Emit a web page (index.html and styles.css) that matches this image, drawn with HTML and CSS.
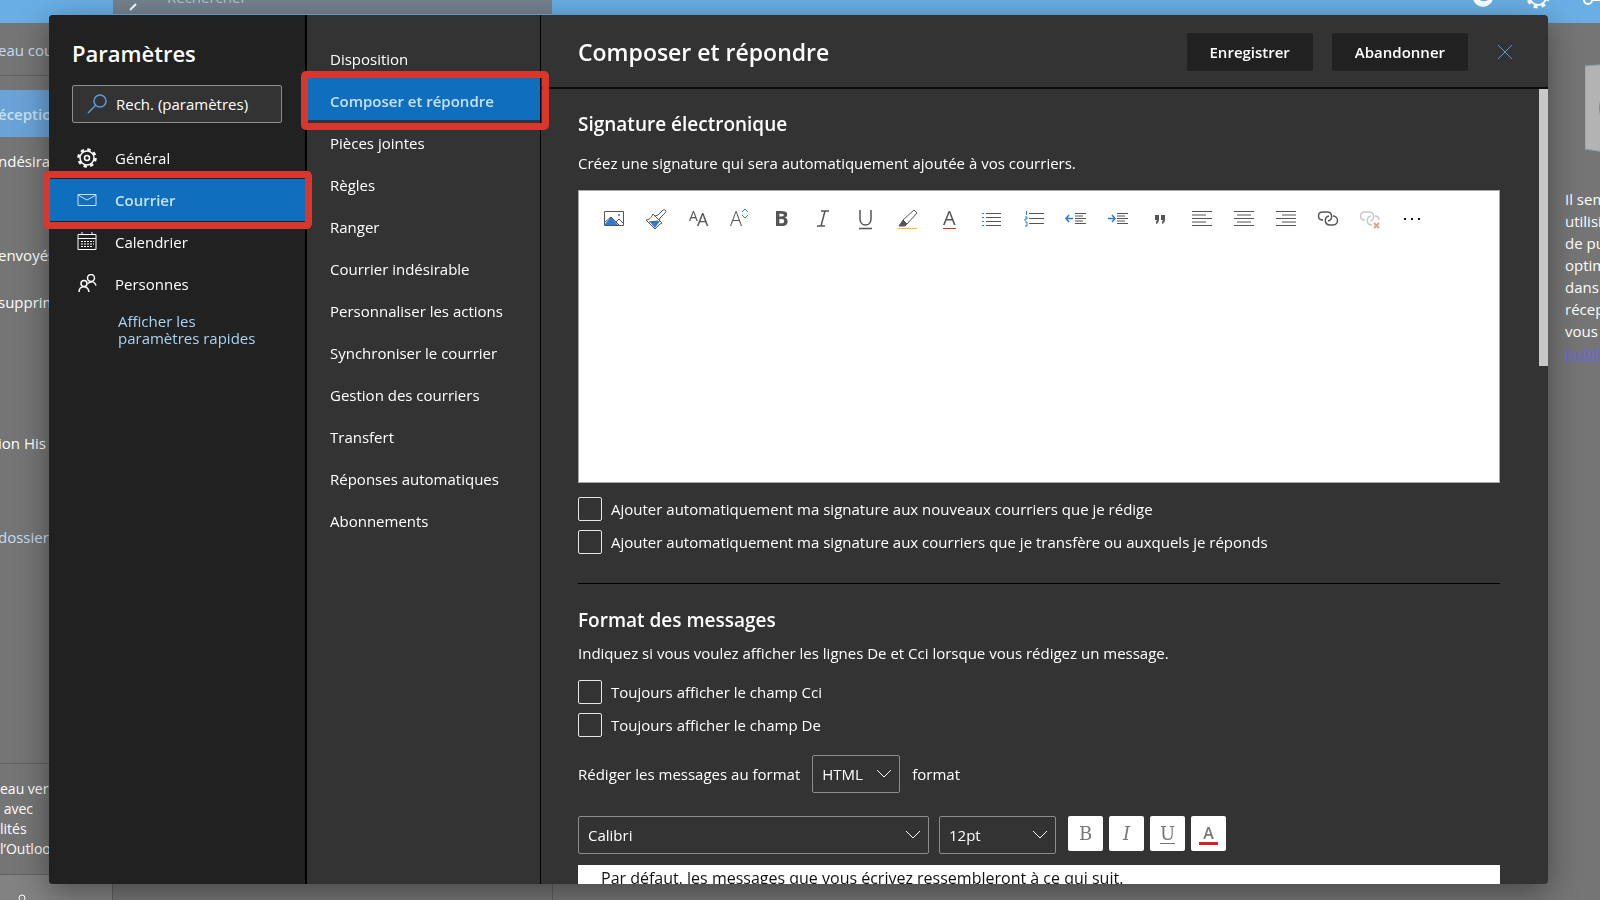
FILE: index.html
```html
<!DOCTYPE html>
<html lang="fr">
<head>
    <meta charset="UTF-8">
    <meta name="viewport" content="width=device-width, initial-scale=1.0">
    <title>Paramètres</title>
    <link rel="stylesheet" href="styles.css">
</head>
<body>
    <!-- Mailbox behind the dialog -->
    <div class="app">
        <div class="topbar">
            <div class="topbar-search">
                <svg width="24" height="24" viewBox="0 0 24 24"><path d="M3 14l6-6" /></svg>
                <span>Rechercher</span>
            </div>
            <div class="topbar-icons">
                <svg width="24" height="24" viewBox="0 0 24 24"><circle cx="12" cy="11" r="10" fill="#fff" stroke="none"/><path d="M7 7c0 6 5 8 9 6" stroke="#69afe5" stroke-width="3"/></svg>
                <svg width="24" height="24" viewBox="0 0 24 24"><circle cx="12" cy="11" r="8" stroke-width="2"/><circle cx="12" cy="11" r="10" stroke-width="3" stroke-dasharray="4 4"/></svg>
                <svg width="24" height="24" viewBox="0 0 24 24"><circle cx="7" cy="14" r="4" stroke-width="2"/><path d="M11 14h12" stroke-width="2"/></svg>
            </div>
        </div>
        <div class="app-body">
            <div class="folders">
                <div class="folder new">eau cou</div>
                <div class="folder current">éceptio</div>
                <div class="folder">ndésirab</div>
                <div class="folder"></div>
                <div class="folder">envoyés</div>
                <div class="folder">supprim</div>
                <div class="folder"></div>
                <div class="folder"></div>
                <div class="folder">ion His</div>
                <div class="folder"></div>
                <div class="folder link">dossier</div>
                <div class="promo">eau ver<br>&nbsp;avec<br>lités<br>l’Outloo</div>
                <div class="modules">
                    <svg width="18" height="24" viewBox="0 0 18 24"><circle cx="9" cy="5" r="3"/><path d="M3 16c0-10 12-10 12 0"/></svg>
                </div>
            </div>
            <div class="messages"></div>
            <div class="reading"></div>
            <div class="ad">
                <svg class="ad-box" width="40" height="92" viewBox="0 0 40 92"><path d="M0 3L40 0V92L0 86z" fill="#b3b3b3" stroke="#8aa2b5"/><circle cx="34" cy="45" r="20" fill="#8f8778" stroke="none"/></svg>
                <p>Il sem<br>utilisi<br>de pu<br>optim<br>dans<br>récep<br>vous<br><a href="#">public</a></p>
            </div>
        </div>
    </div>

    <div class="overlay">
        <div class="dialog">
            <nav class="categories">
                <h1>Paramètres</h1>
                <label class="search">
                    <svg width="20" height="20" viewBox="0 0 20 20"><circle cx="13" cy="7" r="6"/><path d="M9 11L1 19"/></svg>
                    <input type="text" placeholder="Rech. (paramètres)" aria-label="Rech. (paramètres)">
                </label>
                <ul>
                    <li><a href="#">
                        <svg width="20" height="20" viewBox="0 0 20 20"><circle cx="10" cy="10" r="7" stroke-width="1.500"/><circle cx="10" cy="10" r="8.500" stroke-width="2.500" stroke-dasharray="3.340 3.340"/><circle cx="10" cy="10" r="2.500" stroke-width="1.500"/></svg>
                        Général</a></li>
                    <li class="selected"><a href="#">
                        <svg width="20" height="20" viewBox="0 0 20 20"><path d="M1 4.500h18v11H1zM1 5l9 5 9-5"/></svg>
                        Courrier</a></li>
                    <li><a href="#">
                        <svg width="20" height="20" viewBox="0 0 20 20"><path d="M1 2.500h18v15H1zM1 6.500h18M5 0v3M15 0v3"/><path d="M4 9.500h13M4 12h13M4 14.500h11" stroke-dasharray="2 1"/></svg>
                        Calendrier</a></li>
                    <li><a href="#">
                        <svg width="20" height="20" viewBox="0 0 20 20" stroke-width="1.500"><circle cx="14" cy="4" r="3.500"/><path d="M11 9.500c3-3 7-2 8 2"/><circle cx="7" cy="9.500" r="3"/><path d="M2 18c0-7 9-7 10 0"/></svg>
                        Personnes</a></li>
                </ul>
                <a class="quick" href="#">Afficher les<br>paramètres rapides</a>
            </nav>

            <nav class="pages">
                <ul>
                    <li><a href="#">Disposition</a></li>
                    <li class="selected"><a href="#">Composer et répondre</a></li>
                    <li><a href="#">Pièces jointes</a></li>
                    <li><a href="#">Règles</a></li>
                    <li><a href="#">Ranger</a></li>
                    <li><a href="#">Courrier indésirable</a></li>
                    <li><a href="#">Personnaliser les actions</a></li>
                    <li><a href="#">Synchroniser le courrier</a></li>
                    <li><a href="#">Gestion des courriers</a></li>
                    <li><a href="#">Transfert</a></li>
                    <li><a href="#">Réponses automatiques</a></li>
                    <li><a href="#">Abonnements</a></li>
                </ul>
            </nav>

            <main class="panel">
                <header>
                    <h2>Composer et répondre</h2>
                    <button class="action">Enregistrer</button>
                    <button class="action">Abandonner</button>
                    <button class="close" aria-label="Fermer">
                        <svg width="16" height="16" viewBox="0 0 16 16"><path d="M1 1l14 14M15 1L1 15"/></svg>
                    </button>
                </header>
                <div class="content">
                    <section class="signature">
                        <h3>Signature électronique</h3>
                        <p>Créez une signature qui sera automatiquement ajoutée à vos courriers.</p>
                        <div class="editor">
                            <div class="toolbar">
                                <button aria-label="Image"><svg width="24" height="24" viewBox="0 0 24 24"><path d="M3 17l6-7 7 8H3z" fill="#2b7cd3" stroke="none"/><path d="M2.500 4.500h19v14h-19zM3 15l6-5 8 8M14 15l3-3 4 4"/><circle cx="17" cy="8" r="1" fill="#2b7cd3" stroke="none"/></svg></button>
                                <button aria-label="Reproduire la mise en forme"><svg width="24" height="24" viewBox="0 0 24 24"><path d="M6 15l10-1-5 7z" fill="#2b7cd3" stroke="none"/><path d="M9 7l9 9-2 1-5 5-9-9c3 0 5-2 7-6zM11 9l3-1 5-5c2-1 4 1 2 3l-5 5-1 2M5 15l9-1"/></svg></button>
                                <button aria-label="Police"><svg width="24" height="24" viewBox="0 0 24 24"><text x="3" y="14" font-size="14" class="regular">A</text><text x="11" y="19" font-size="18" class="regular">A</text></svg></button>
                                <button aria-label="Taille"><svg width="24" height="24" viewBox="0 0 24 24"><text x="2" y="19" font-size="20">A</text><path d="M14 5l3-3 3 3M14 8l3 3 3-3" stroke="#2b7cd3"/></svg></button>
                                <button aria-label="Gras"><svg width="24" height="24" viewBox="0 0 24 24"><text x="4" y="19" font-size="22" class="heavy">B</text></svg></button>
                                <button aria-label="Italique"><svg width="24" height="24" viewBox="0 0 24 24"><path d="M9 4h8M5 19h8M13 4L9 19" stroke-width="1.500"/></svg></button>
                                <button aria-label="Souligné"><svg width="24" height="24" viewBox="0 0 24 24"><path d="M6 3v9c0 8 11 8 11 0V3M5 21.500h13" stroke-width="1.500"/></svg></button>
                                <button aria-label="Surligner"><svg width="24" height="24" viewBox="0 0 24 24"><path d="M7 13L18 3l3 3-10 11zM7 13l4 4"/><path d="M7 13l4 4-2 2H3z" fill="#555"/><path d="M2 21.500h19" stroke="#ffc000"/></svg></button>
                                <button aria-label="Couleur"><svg width="24" height="24" viewBox="0 0 24 24"><text x="5" y="18" font-size="20" class="regular">A</text><path d="M5 21.500h13" stroke="#d13414"/></svg></button>
                                <button aria-label="Puces"><svg width="24" height="24" viewBox="0 0 24 24"><path d="M6 6.500h15M6 10.500h15M6 14.500h15M6 18.500h15"/><path d="M2 6.500h2M2 10.500h2M2 14.500h2M2 18.500h2" stroke="#2b7cd3"/></svg></button>
                                <button aria-label="Numérotation"><svg width="24" height="24" viewBox="0 0 24 24"><path d="M7 6.500h15M7 11.500h15M7 16.500h15"/><path d="M4.500 4v4M3 10h2v2H3v2M3 15h2v4H3" stroke="#2b7cd3"/></svg></button>
                                <button aria-label="Diminuer le retrait"><svg width="24" height="24" viewBox="0 0 24 24"><path d="M11 6.500h11M11 9h8M11 11.500h11M11 14h8M11 16.500h11"/><path d="M9 11.500H2M5 8l-3 3.500L5 15" stroke="#2b7cd3" stroke-width="1.500"/></svg></button>
                                <button aria-label="Augmenter le retrait"><svg width="24" height="24" viewBox="0 0 24 24"><path d="M11 6.500h11M11 9h8M11 11.500h11M11 14h8M11 16.500h11"/><path d="M2 11.500h7M6 8l3 3.500L6 15" stroke="#2b7cd3" stroke-width="1.500"/></svg></button>
                                <button aria-label="Citation"><svg width="24" height="24" viewBox="0 0 24 24"><path d="M7 8h4v4c0 3-1 4-3 5v-2l1-2H7zM13 8h4v4c0 3-1 4-3 5v-2l1-2h-2z" fill="#555" stroke="none"/></svg></button>
                                <button aria-label="Aligner à gauche"><svg width="24" height="24" viewBox="0 0 24 24"><path d="M2 4.500h20M2 8h14M2 11.500h20M2 15h14M2 18.500h20"/></svg></button>
                                <button aria-label="Centrer"><svg width="24" height="24" viewBox="0 0 24 24"><path d="M2 4.500h20M5 8h14M2 11.500h20M5 15h14M2 18.500h20"/></svg></button>
                                <button aria-label="Aligner à droite"><svg width="24" height="24" viewBox="0 0 24 24"><path d="M2 4.500h20M8 8h14M2 11.500h20M8 15h14M2 18.500h20"/></svg></button>
                                <button aria-label="Lien"><svg width="24" height="24" viewBox="0 0 24 24"><path d="M7 13c-6 0-6-8 0-8h4c6 0 6 8 1 9M17 9c6 0 6 9 0 9h-3c-6 0-6-8-1-9" stroke-width="1.500"/></svg></button>
                                <button aria-label="Supprimer le lien"><svg width="24" height="24" viewBox="0 0 24 24"><path d="M7 13c-6 0-6-8 0-8h4c6 0 6 8 1 9M21 13c0-3-2-4-4-4M14 18c-6 0-6-8-1-9" stroke="#c8c8c8" stroke-width="1.500"/><path d="M16 16l5 5M21 16l-5 5" stroke="#eb9d8c" stroke-width="2"/></svg></button>
                                <button aria-label="Plus"><svg width="24" height="24" viewBox="0 0 24 24"><path d="M4 11h2v2H4zM11 11h2v2h-2zM18 11h2v2h-2z" fill="#111" stroke="none"/></svg></button>
                            </div>
                            <textarea aria-label="Signature"></textarea>
                        </div>
                        <label class="check"><input type="checkbox">Ajouter automatiquement ma signature aux nouveaux courriers que je rédige</label>
                        <label class="check"><input type="checkbox">Ajouter automatiquement ma signature aux courriers que je transfère ou auxquels je réponds</label>
                    </section>
                    <section class="format">
                        <h3>Format des messages</h3>
                        <p>Indiquez si vous voulez afficher les lignes De et Cci lorsque vous rédigez un message.</p>
                        <label class="check"><input type="checkbox">Toujours afficher le champ Cci</label>
                        <label class="check"><input type="checkbox">Toujours afficher le champ De</label>
                        <div class="compose-as">
                            <label for="compose">Rédiger les messages au format</label>
                            <div class="select kind">
                                <select id="compose"><option>HTML</option></select>
                                <svg width="16" height="10" viewBox="0 0 16 10"><path d="M1 1l7 7 7-7"/></svg>
                            </div>
                            <span>format</span>
                        </div>
                        <div class="font-row">
                            <div class="select family">
                                <select aria-label="Police"><option>Calibri</option></select>
                                <svg width="16" height="10" viewBox="0 0 16 10"><path d="M1 1l7 7 7-7"/></svg>
                            </div>
                            <div class="select size">
                                <select aria-label="Taille"><option>12pt</option></select>
                                <svg width="16" height="10" viewBox="0 0 16 10"><path d="M1 1l7 7 7-7"/></svg>
                            </div>
                            <div class="font-buttons">
                                <button>B</button>
                                <button class="italic">I</button>
                                <button class="underline"><span>U</span></button>
                                <button class="color"><span>A</span></button>
                            </div>
                        </div>
                        <div class="preview">Par défaut, les messages que vous écrivez ressembleront à ce qui suit.</div>
                    </section>
                    <div class="scrollbar"></div>
                </div>
            </main>
        </div>
    </div>
</body>
</html>
```
FILE: styles.css
```css
* {
    box-sizing: border-box;
}
body {
    margin: 0;
    height: 100vh;
    overflow: hidden;
    font-family: "Open Sans", "Noto Sans", sans-serif;
    font-size: 15px;
    line-height: 22px;
    color: #fff;
    background: #757575;
}
h1, h2, h3, p, ul {
    margin: 0;
    padding: 0;
}
ul {
    list-style: none;
}
a {
    color: inherit;
    text-decoration: none;
}
button, input, select, textarea {
    font: inherit;
    color: inherit;
    margin: 0;
}
svg {
    flex: none;
    fill: none;
    stroke: currentColor;
}

/* mailbox in the background */
.app {
    height: 100vh;
    display: flex;
    flex-direction: column;
}
.topbar {
    height: 23px;
    flex: none;
    display: flex;
    justify-content: space-between;
    align-items: flex-start;
    padding-left: 113px;
    background: #69afe5;
    overflow: hidden;
}
.topbar-search {
    width: 439px;
    height: 14px;
    display: flex;
    align-items: flex-end;
    gap: 16px;
    padding: 0 0 6px 14px;
    background: #74838f;
    color: #b4c3d0;
}
.topbar-search svg {
    margin-bottom: -12px;
    stroke: #fff;
    stroke-width: 2;
}
.topbar-icons {
    display: flex;
    gap: 31px;
    margin-top: -14px;
    margin-right: -5px;
}
.app-body {
    flex: 1;
    display: flex;
    min-height: 0;
}
.folders {
    width: 113px;
    flex: none;
    display: flex;
    flex-direction: column;
    border-right: 1px solid #5e5e5e;
    white-space: nowrap;
}
.folder {
    height: 47px;
    flex: none;
    line-height: 48px;
    text-indent: -2px;
}
.folder.new {
    height: 53px;
    line-height: 54px;
    margin-bottom: 14px;
    border-bottom: 1px solid #606060;
    color: #c7dcf5;
}
.folder.current {
    background: #6aa3d8;
    color: #c7e0f4;
    font-weight: 600;
}
.folder.link {
    color: #c7dcf5;
}
.promo {
    margin-top: auto;
    padding: 15px 0;
    border-top: 1px solid #606060;
    border-bottom: 1px solid #606060;
    font-size: 14px;
    line-height: 20px;
}
.modules {
    height: 25px;
    padding: 18px 0 0 13px;
    background: #828282;
    overflow: hidden;
}
.messages {
    width: 440px;
    border-right: 1px solid #5e5e5e;
}
.reading {
    flex: 1;
}
.ad {
    width: 35px;
    overflow: hidden;
    white-space: nowrap;
}
.ad-box {
    display: block;
    margin: 40px 0 33px 20px;
}
.ad a {
    color: #6c63e0;
    text-decoration: underline;
}

/* settings dialog */
.overlay {
    position: fixed;
    inset: 0;
    padding: 15px 52px 16px 49px;
}
.dialog {
    height: 100%;
    display: flex;
    background: #333;
    border-radius: 4px;
    box-shadow: 0 8px 32px rgba(0, 0, 0, 0.4);
}
.categories {
    width: 258px;
    flex: none;
    background: #212121;
    border-right: 2px solid #000;
    border-radius: 4px 0 0 4px;
}
.categories h1 {
    margin: 22px 23px 16px;
    font-size: 22px;
    line-height: 32px;
    font-weight: 600;
}
.search {
    display: flex;
    align-items: center;
    gap: 9px;
    height: 38px;
    margin: 0 23px 14px;
    padding: 0 14px;
    background: #333;
    border: 1px solid #8c8c8c;
    border-radius: 2px;
}
.search svg {
    color: #5b9bd5;
    stroke-width: 1.5;
}
.search input {
    min-width: 0;
    flex: 1;
    padding: 0;
    border: 0;
    outline: 0;
    background: none;
}
.search input::placeholder {
    color: #fff;
    opacity: 1;
}
.categories li, .pages li {
    position: relative;
    height: 42px;
}
.categories li a, .pages li a {
    display: flex;
    align-items: center;
    height: 42px;
}
.categories li a {
    gap: 18px;
    padding-left: 28px;
}
.pages li a {
    padding: 3px 0 0 23px;
}
li.selected a {
    background: #106ebe;
    color: #c7e0f4;
    font-weight: 600;
}
/* red marker round the selected entry */
li.selected::after {
    content: "";
    position: absolute;
    z-index: 2;
    inset: -8px -7px -8px -6px;
    border: 7px solid #d9362e;
    border-radius: 5px;
}
.pages li.selected::after {
    inset: -7px -9px -10px -6px;
}
.quick {
    display: block;
    margin: 8px 0 0 69px;
    line-height: 17px;
    color: #a9d3f2;
}
.pages {
    width: 234px;
    flex: none;
    padding-top: 21px;
    border-right: 1px solid #000;
}

.panel {
    flex: 1;
    min-width: 0;
    display: flex;
    flex-direction: column;
}
.panel header {
    display: flex;
    align-items: center;
    flex: none;
    height: 74px;
    padding: 2px 35px 0 37px;
    border-bottom: 2px solid #0c0c0c;
}
.panel h2 {
    flex: 1;
    font-size: 23px;
    line-height: 32px;
    font-weight: 600;
}
.action {
    height: 38px;
    margin-right: 19px;
    padding: 0 23px;
    border: 0;
    border-radius: 2px;
    background: #212121;
    font-weight: 600;
}
.close {
    display: flex;
    margin-left: 10px;
    padding: 0;
    border: 0;
    background: none;
    color: #5b9bd5;
}
.content {
    position: relative;
    flex: 1;
    min-height: 0;
    padding: 21px 48px 0 37px;
    overflow: hidden;
    border-radius: 0 0 4px 0;
}
.scrollbar {
    position: absolute;
    top: 0;
    right: 0;
    width: 9px;
    height: 277px;
    background: #c8c8c8;
}
.content h3 {
    font-size: 19px;
    line-height: 28px;
    font-weight: 600;
}
.signature {
    padding-bottom: 29px;
    border-bottom: 1px solid #000;
}
.signature p {
    margin: 14px 0 16px;
}
.editor {
    height: 293px;
    margin-bottom: 14px;
    padding: 7px 14px;
    display: flex;
    flex-direction: column;
    background: #fff;
    border: 1px solid #a6a6a6;
    color: #555;
}
.toolbar {
    display: flex;
}
.toolbar button {
    width: 42px;
    height: 42px;
    display: flex;
    align-items: center;
    justify-content: center;
    padding: 0;
    border: 0;
    background: none;
}
.toolbar text {
    fill: #555;
    stroke: none;
    font-weight: 300;
}
.toolbar .regular {
    font-weight: 400;
}
.toolbar .heavy {
    font-weight: 700;
}
.editor textarea {
    flex: 1;
    border: 0;
    outline: 0;
    resize: none;
    background: none;
}
.check {
    display: flex;
    align-items: center;
    gap: 9px;
    height: 24px;
}
.check + .check {
    margin-top: 9px;
}
.check input {
    appearance: none;
    width: 24px;
    height: 24px;
    flex: none;
    border: 1px solid #e6e6e6;
    border-radius: 2px;
}
.format {
    padding-top: 22px;
}
.format p {
    margin: 8px 0 16px;
}
.compose-as {
    display: flex;
    align-items: center;
    gap: 12px;
    margin: 18px 0 23px;
}
.select {
    position: relative;
}
.select select {
    appearance: none;
    display: block;
    width: 100%;
    height: 38px;
    padding: 0 9px;
    border: 1px solid #8c8c8c;
    border-radius: 2px;
    background: none;
}
.select svg {
    position: absolute;
    right: 8px;
    top: 14px;
    pointer-events: none;
}
.kind {
    width: 88px;
}
.family {
    width: 351px;
}
.size {
    width: 117px;
}
.font-row {
    display: flex;
    gap: 10px;
    margin-bottom: 11px;
}
.font-buttons {
    display: flex;
    gap: 6px;
    margin-left: 2px;
}
.font-buttons button {
    width: 35px;
    height: 35px;
    padding: 0;
    border: 0;
    border-radius: 2px;
    background: #fff;
    color: #777;
    font-family: "DejaVu Serif", serif;
    font-size: 18px;
}
.font-buttons .italic {
    font-style: italic;
}
.font-buttons span {
    display: inline-block;
    line-height: 18px;
}
.font-buttons .underline span {
    border-bottom: 1px solid #777;
}
.font-buttons .color span {
    padding: 0 4px;
    border-bottom: 3px solid #d1232a;
    font-family: "Open Sans", sans-serif;
    font-size: 16px;
    font-weight: 600;
}
.preview {
    height: 200px;
    padding: 2px 23px;
    background: #fff;
    color: #111;
    font-size: 16px;
}
```
